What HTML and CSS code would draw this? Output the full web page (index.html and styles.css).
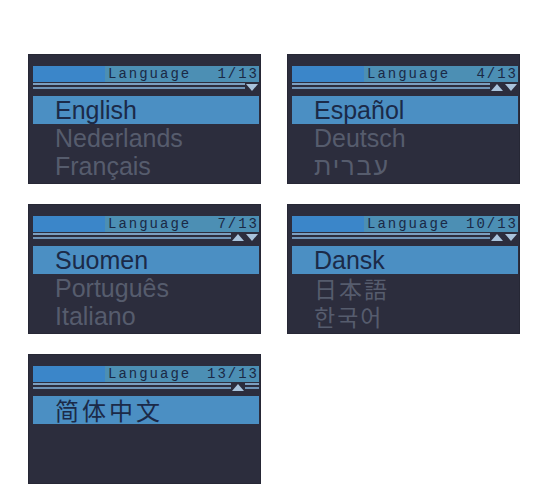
FILE: index.html
```html
<!DOCTYPE html>
<html lang="en">
<head>
<meta charset="utf-8">
<title>Language screens</title>
<link rel="stylesheet" href="styles.css">
</head>
<body>
<div class="grid">
  <div class="screen">
    <div class="hdr"><span class="hdr-fill"></span><span class="hdr-title">Language</span><span class="hdr-count">1/13</span></div>
    <div class="rule"><span class="lines"></span><span class="slot lines"></span><span class="slot"><svg viewBox="0 0 12 7" class="tri"><polygon points="0,0 12,0 6,7"/></svg></span></div>
    <ul class="items">
      <li class="sel">English</li>
      <li>Nederlands</li>
      <li>Français</li>
    </ul>
  </div>
  <div class="screen">
    <div class="hdr"><span class="hdr-fill"></span><span class="hdr-title">Language</span><span class="hdr-count">4/13</span></div>
    <div class="rule"><span class="lines"></span><span class="slot"><svg viewBox="0 0 12 7" class="tri"><polygon points="0,7 12,7 6,0"/></svg></span><span class="slot"><svg viewBox="0 0 12 7" class="tri"><polygon points="0,0 12,0 6,7"/></svg></span></div>
    <ul class="items">
      <li class="sel">Español</li>
      <li>Deutsch</li>
      <li lang="he" class="heb">עברית</li>
    </ul>
  </div>
  <div class="screen">
    <div class="hdr"><span class="hdr-fill"></span><span class="hdr-title">Language</span><span class="hdr-count">7/13</span></div>
    <div class="rule"><span class="lines"></span><span class="slot"><svg viewBox="0 0 12 7" class="tri"><polygon points="0,7 12,7 6,0"/></svg></span><span class="slot"><svg viewBox="0 0 12 7" class="tri"><polygon points="0,0 12,0 6,7"/></svg></span></div>
    <ul class="items">
      <li class="sel">Suomen</li>
      <li>Português</li>
      <li>Italiano</li>
    </ul>
  </div>
  <div class="screen">
    <div class="hdr"><span class="hdr-fill"></span><span class="hdr-title">Language</span><span class="hdr-count">10/13</span></div>
    <div class="rule"><span class="lines"></span><span class="slot"><svg viewBox="0 0 12 7" class="tri"><polygon points="0,7 12,7 6,0"/></svg></span><span class="slot"><svg viewBox="0 0 12 7" class="tri"><polygon points="0,0 12,0 6,7"/></svg></span></div>
    <ul class="items">
      <li class="sel">Dansk</li>
      <li lang="ja" class="cjk-ja">日本語</li>
      <li lang="ko" class="cjk-ko">한국어</li>
    </ul>
  </div>
  <div class="screen">
    <div class="hdr"><span class="hdr-fill"></span><span class="hdr-title">Language</span><span class="hdr-count">13/13</span></div>
    <div class="rule"><span class="lines"></span><span class="slot"><svg viewBox="0 0 12 7" class="tri"><polygon points="0,7 12,7 6,0"/></svg></span><span class="slot lines"></span></div>
    <ul class="items">
      <li class="sel cjk-sc" lang="zh-CN">简体中文</li>
    </ul>
  </div>
</div>
</body>
</html>
```

FILE: styles.css
```css
html, body {
  margin: 0;
  padding: 0;
  background: #ffffff;
}

.grid {
  display: grid;
  grid-template-columns: 233px 233px;
  grid-auto-rows: 130px;
  column-gap: 26px;
  row-gap: 20px;
  padding: 54px 0 0 28px;
}

.screen {
  background: #2c2d3d;
  padding: 12px 2px 4px 5px;
  overflow: hidden;
  box-sizing: border-box;
  box-shadow: inset 0 0 0 1px #262735;
}

.hdr {
  display: flex;
  height: 16px;
  background: #4c8fb4;
  overflow: hidden;
  font-family: "Liberation Mono", "DejaVu Sans Mono", monospace;
  font-size: 14px;
  line-height: 16px;
  letter-spacing: 2px;
  color: #1a2946;
  white-space: nowrap;
}

.hdr-fill {
  flex: 0 0 72px;
  background: #3b86c9;
}

.hdr-title {
  padding-left: 3px;
}

.hdr-count {
  margin-left: auto;
}

.rule {
  display: flex;
  height: 12px;
}

.lines {
  flex: 1;
  height: 6px;
  margin-top: 1px;
  box-sizing: border-box;
  border-top: 2px solid #7c9fc0;
  border-bottom: 2px solid #6f93b6;
}

.slot {
  flex: 0 0 14px;
  display: flex;
  justify-content: center;
}

.slot.lines {
  flex: 0 0 14px;
}

.tri {
  width: 12px;
  height: 7px;
  margin-top: 2px;
  fill: #a9c3dc;
}

.items {
  list-style: none;
  margin: 2px 0 0 0;
  padding: 0;
}

.items li {
  height: 28px;
  line-height: 28px;
  padding-left: 22px;
  font-family: "Liberation Sans", "DejaVu Sans", sans-serif;
  font-size: 25px;
  color: #565c6d;
  white-space: nowrap;
}

.items li.sel {
  background: #4b8fc3;
  color: #1b2a48;
}

.heb {
  letter-spacing: 2px;
}

.cjk-ja {
  font-family: "Noto Sans CJK JP", sans-serif !important;
  font-size: 23px !important;
  letter-spacing: 2px;
}

.cjk-ko {
  font-family: "Noto Sans CJK KR", sans-serif !important;
  font-size: 23px !important;
  letter-spacing: 2px;
}

.cjk-sc {
  font-family: "Noto Sans CJK SC", sans-serif !important;
  font-size: 24px !important;
  letter-spacing: 3px;
}
```
